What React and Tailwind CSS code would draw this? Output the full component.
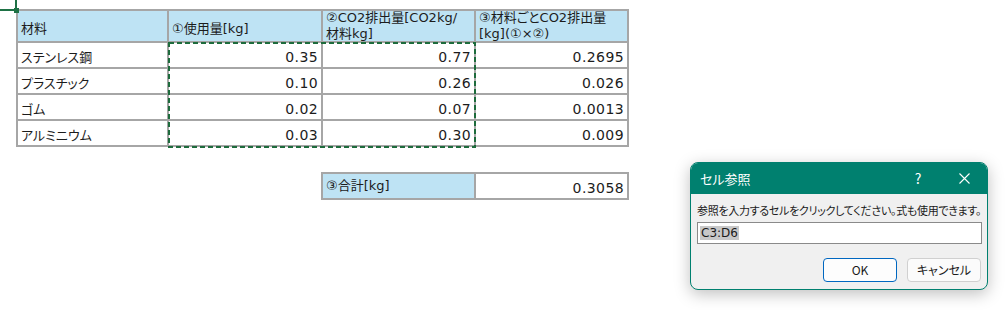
import React from "react";

const FONT = "font-['DejaVu_Sans','Noto_Sans_CJK_JP',sans-serif] [font-feature-settings:'palt']";

const rows = [
  ["ステンレス鋼", "0.35", "0.77", "0.2695"],
  ["プラスチック", "0.10", "0.26", "0.026"],
  ["ゴム", "0.02", "0.07", "0.0013"],
  ["アルミニウム", "0.03", "0.30", "0.009"],
];

function HeadCell({ children, two }) {
  return (
    <div
      className={
        "bg-[#bee3f4] px-[3px] text-[13px] leading-[16px] text-[#1c1c1c] flex flex-col whitespace-nowrap " +
        (two ? "justify-center" : "justify-end pb-[4px]")
      }
    >
      {children}
    </div>
  );
}

function Cell({ children, num }) {
  return (
    <div
      className={
        "bg-white px-[3px] leading-[17px] text-[#1c1c1c] flex items-end pb-[1px] " +
        (num ? "justify-end text-[14px] tracking-[0.4px]" : "justify-start text-[13px]")
      }
    >
      {children}
    </div>
  );
}

export default function App() {
  return (
    <div className={"relative w-[1008px] h-[310px] bg-white overflow-hidden " + FONT}>
      {/* active-cell corner from the selection above */}
      <div className="absolute left-[15px] top-0 w-[2px] h-[9px] bg-[#1e7145]" />
      <div className="absolute left-0 top-[9px] w-[15px] h-[2px] bg-[#1e7145]" />
      <div className="absolute left-[14px] top-[8px] w-[5px] h-[5px] bg-[#1e7145]" />

      <div className="flex flex-col pl-[16px] pt-[9px]">
        <div className="grid grid-cols-[149px_152px_151px_151px] grid-rows-[30px_24px_24px_24px_24px] gap-[2px] p-[2px] bg-[#a6a6a6] w-fit">
          <HeadCell>材料</HeadCell>
          <HeadCell>①使用量[kg]</HeadCell>
          <HeadCell two>
            <span>②CO2排出量[CO2kg/</span>
            <span>材料kg]</span>
          </HeadCell>
          <HeadCell two>
            <span>③材料ごとCO2排出量</span>
            <span>[kg](①×②)</span>
          </HeadCell>
          {rows.map((r) => (
            <React.Fragment key={r[0]}>
              <Cell>{r[0]}</Cell>
              <Cell num>{r[1]}</Cell>
              <Cell num>{r[2]}</Cell>
              <Cell num>{r[3]}</Cell>
            </React.Fragment>
          ))}
        </div>

        <div className="ml-[305px] mt-[25px] grid grid-cols-[151px_151px] grid-rows-[24px] gap-[2px] p-[2px] bg-[#a6a6a6] w-fit">
          <HeadCell>③合計[kg]</HeadCell>
          <Cell num>0.3058</Cell>
        </div>
      </div>

      {/* copy marquee around C3:D6 */}
      <svg className="absolute left-[168px] top-[42px]" width="308" height="106">
        <rect x="1" y="1" width="306" height="104" fill="none" stroke="#1d6b3c" strokeWidth="2" strokeDasharray="5 3" />
      </svg>

      {/* cell reference dialog */}
      <div className="absolute left-[690px] top-[162px] w-[298px] h-[128px] rounded-[8px] border border-[#00806f] bg-[#f0f0f0] shadow-[0_4px_16px_rgba(0,0,0,0.25)] overflow-hidden flex flex-col font-['Noto_Sans_CJK_JP',sans-serif]">
        <div className="h-[31px] bg-[#00806f] flex items-center pl-[9px] text-white text-[13px]">
          <span className="flex-1">セル参照</span>
          <span className="w-[46px] text-center text-[14px]">?</span>
          <span className="w-[46px] flex justify-center">
            <svg width="11" height="11" viewBox="0 0 11 11">
              <path d="M0.5 0.5 L10.5 10.5 M10.5 0.5 L0.5 10.5" stroke="white" strokeWidth="1.1" />
            </svg>
          </span>
        </div>
        <div className="flex flex-col px-[6px] pt-[8px]">
          <div className="text-[11px] leading-[16px] tracking-[-0.3px] text-[#1a1a1a] whitespace-nowrap">
            参照を入力するセルをクリックしてください。式も使用できます。
          </div>
          <div className="mt-[4px] h-[22px] w-[285px] border border-[#8a8a8a] bg-white flex items-center pl-[2px]">
            <span className="bg-[#c8c8c8] text-[12px] leading-[14px] px-[1px] text-[#1a1a1a] font-['DejaVu_Sans',sans-serif]">C3:D6</span>
          </div>
          <div className="mt-[14px] flex justify-end gap-[10px]">
            <button className="w-[74px] h-[24px] rounded-[4px] border border-[#0067c0] bg-[#fdfdfd] text-[12px] text-[#1a1a1a]">
              OK
            </button>
            <button className="w-[74px] h-[24px] rounded-[4px] border border-[#d0d0d0] bg-[#fbfbfb] text-[12px] text-[#1a1a1a]">
              キャンセル
            </button>
          </div>
        </div>
      </div>
    </div>
  );
}
